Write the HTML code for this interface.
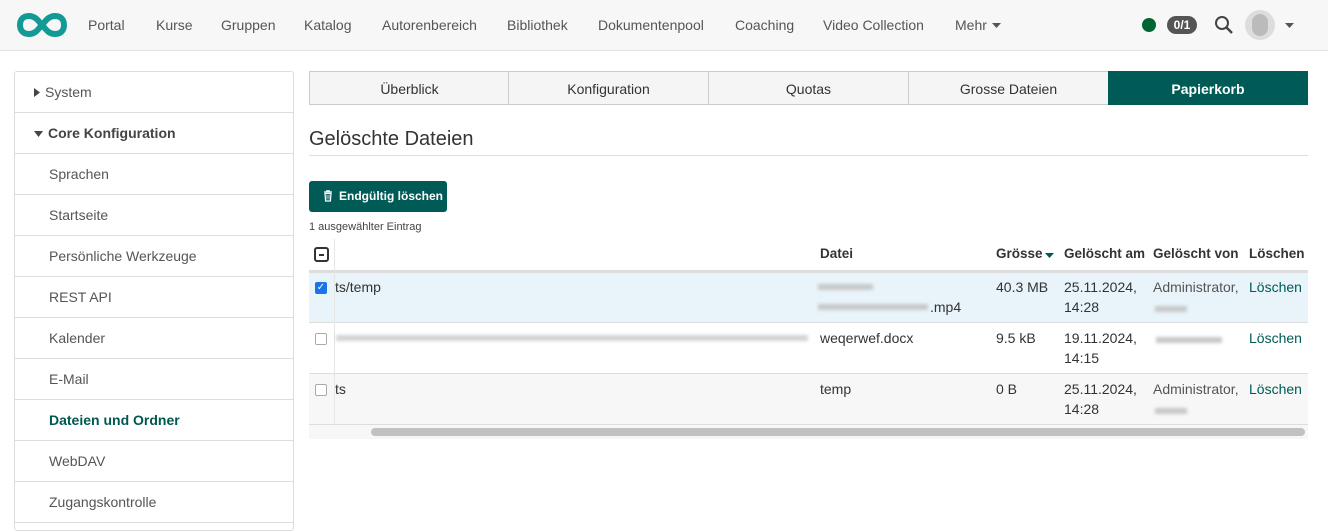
<!DOCTYPE html>
<html><head><meta charset="utf-8"><style>
*{box-sizing:border-box;margin:0;padding:0}
body{width:1328px;height:508px;overflow:hidden;background:#fff;font-family:"Liberation Sans",Arial,sans-serif;color:#333;position:relative;font-size:14px}
.a{position:absolute;white-space:nowrap}
.nav{left:0;top:0;width:1328px;height:51px;background:#f7f7f7;border-bottom:1px solid #e2e2e2}
.side{left:14px;top:71px;width:280px;height:460px;border:1px solid #ddd;border-radius:3px}
.si{position:absolute;left:0;width:278px;height:41px;border-bottom:1px solid #ddd;font-size:14px;color:#555;padding:12px 0 0 34px}
.tab{top:71px;height:34px;border:1px solid #ccc;background:#f5f5f5;font-size:14px;text-align:center;padding-top:9px;color:#333;width:201px}
.td{font-size:14px;color:#333}
.blur{background:#c8c8c8;filter:blur(1.5px);height:6px;position:absolute}
.cb{width:12px;height:12px;border:1px solid #aaa;border-radius:2px;background:#fff}
</style></head><body>
<div class="a nav"></div>
<svg class="a" style="left:16px;top:12px" width="52" height="26" viewBox="0 0 52 26"><path d="M13 4C6 4 4 9 4 13s2 9 9 9c7 0 10-6 13-9s6-9 13-9c7 0 9 5 9 9s-2 9-9 9c-7 0-10-6-13-9S20 4 13 4z" fill="none" stroke="#139a94" stroke-width="6"/></svg>
<span class="a" style="left:88px;top:17px;color:#555">Portal</span>
<span class="a" style="left:156px;top:17px;color:#555">Kurse</span>
<span class="a" style="left:221px;top:17px;color:#555">Gruppen</span>
<span class="a" style="left:304px;top:17px;color:#555">Katalog</span>
<span class="a" style="left:382px;top:17px;color:#555">Autorenbereich</span>
<span class="a" style="left:507px;top:17px;color:#555">Bibliothek</span>
<span class="a" style="left:598px;top:17px;color:#555">Dokumentenpool</span>
<span class="a" style="left:735px;top:17px;color:#555">Coaching</span>
<span class="a" style="left:823px;top:17px;color:#555">Video Collection</span>
<span class="a" style="left:955px;top:17px;color:#555">Mehr</span>
<svg class="a" style="left:992px;top:23px" width="9" height="5"><path d="M0 0h9L4.5 5z" fill="#555"/></svg>
<div class="a" style="left:1142px;top:18px;width:14px;height:14px;border-radius:50%;background:#006633"></div>
<div class="a" style="left:1167px;top:16px;width:30px;height:18px;border-radius:9px;background:#555;color:#fff;font-size:12px;font-weight:bold;text-align:center;padding-top:2px">0/1</div>
<svg class="a" style="left:1214px;top:15px" width="20" height="20"><circle cx="8" cy="8" r="6" fill="none" stroke="#444" stroke-width="2"/><path d="M12.5 12.5L18 18" stroke="#444" stroke-width="2.4"/></svg>
<div class="a" style="left:1245px;top:10px;width:30px;height:30px;border-radius:50%;background:#ddd"><div style="margin:4px 7px;width:16px;height:22px;border-radius:8px;background:#bbb"></div></div>
<svg class="a" style="left:1285px;top:23px" width="9" height="5"><path d="M0 0h9L4.5 5z" fill="#555"/></svg>

<div class="a side">
<div class="si" style="top:0;padding-left:19px"><svg width="6" height="9" style="margin-right:5px"><path d="M0 0l6 4.5L0 9z" fill="#444"/></svg>System</div>
<div class="si" style="top:41px;padding-left:19px;font-weight:bold;color:#444"><svg width="9" height="6" style="margin-right:5px;vertical-align:1px"><path d="M0 0h9L4.5 6z" fill="#444"/></svg>Core Konfiguration</div>
<div class="si" style="top:82px">Sprachen</div>
<div class="si" style="top:123px">Startseite</div>
<div class="si" style="top:164px">Persönliche Werkzeuge</div>
<div class="si" style="top:205px">REST API</div>
<div class="si" style="top:246px">Kalender</div>
<div class="si" style="top:287px">E-Mail</div>
<div class="si" style="top:328px;font-weight:bold;color:#00574f">Dateien und Ordner</div>
<div class="si" style="top:369px">WebDAV</div>
<div class="si" style="top:410px">Zugangskontrolle</div>
</div>

<div class="a tab" style="left:309px">Überblick</div>
<div class="a tab" style="left:508px">Konfiguration</div>
<div class="a tab" style="left:708px">Quotas</div>
<div class="a tab" style="left:908px">Grosse Dateien</div>
<div class="a tab" style="left:1108px;width:200px;background:#005a55;border-color:#005a55;color:#fff;font-weight:bold">Papierkorb</div>

<div class="a" style="left:309px;top:128px;font-size:20px;color:#333">Gelöschte Dateien</div>
<div class="a" style="left:309px;top:155px;width:999px;height:1px;background:#ddd"></div>

<div class="a" style="left:309px;top:181px;width:138px;height:31px;background:#005a55;border-radius:3px;color:#fff;font-size:12px;font-weight:bold;padding:8px 0 0 30px">Endgültig löschen</div>
<svg class="a" style="left:323px;top:190px" width="10" height="12"><path d="M1 2h8M3.5 2V0.8h3V2M2 3.5l.6 7.5h4.8L8 3.5z" fill="none" stroke="#fff" stroke-width="1.2"/><path d="M4 5v4.5M6 5v4.5" stroke="#fff" stroke-width=".8"/></svg>
<div class="a" style="left:309px;top:221px;font-size:11px;color:#444">1 ausgewählter Eintrag</div>

<div class="a" style="left:309px;top:270px;width:999px;height:3px;background:#ddd"></div>
<div class="a" style="left:309px;top:273px;width:999px;height:49px;background:#e8f4fa"></div>
<div class="a" style="left:309px;top:322px;width:999px;height:1px;background:#ddd"></div>
<div class="a" style="left:309px;top:373px;width:999px;height:1px;background:#ddd"></div>
<div class="a" style="left:309px;top:374px;width:999px;height:50px;background:#f7f7f7"></div>
<div class="a" style="left:309px;top:424px;width:999px;height:1px;background:#ddd"></div>
<div class="a" style="left:309px;top:425px;width:999px;height:14px;background:#f7f7f7"></div>
<div class="a" style="left:371px;top:428px;width:934px;height:8px;border-radius:4px;background:#c1c1c1"></div>
<div class="a" style="left:309px;top:239px;width:26px;height:186px;border-right:1px solid #e6e6e6"></div>

<div class="a" style="left:314px;top:247px;width:15px;height:15px;border:2px solid #333;border-radius:3px"><div style="margin:4.5px 3px;height:2px;background:#333"></div></div>
<div class="a" style="left:315px;top:282px;width:12px;height:12px;background:#1a73e8;border-radius:2px;color:#fff;font-size:10px;line-height:12px;text-align:center">✓</div>
<div class="a cb" style="left:315px;top:333px"></div>
<div class="a cb" style="left:315px;top:384px"></div>

<span class="a td" style="left:335px;top:279px">ts/temp</span>
<div class="blur" style="left:336px;top:335px;width:472px;opacity:.8"></div>
<span class="a td" style="left:335px;top:381px">ts</span>

<b class="a td" style="left:820px;top:246px;font-size:13.5px">Datei</b>
<b class="a td" style="left:996px;top:246px;font-size:13.5px">Grösse</b>
<svg class="a" style="left:1045px;top:253px" width="9" height="5"><path d="M0 0h9L4.5 5z" fill="#005a55"/></svg>
<b class="a td" style="left:1064px;top:246px;font-size:13.5px">Gelöscht am</b>
<b class="a td" style="left:1153px;top:246px;font-size:13.5px">Gelöscht von</b>
<b class="a td" style="left:1249px;top:246px;font-size:13.5px">Löschen</b>

<div class="blur" style="left:818px;top:284px;width:55px"></div>
<div class="blur" style="left:818px;top:304px;width:110px"></div>
<span class="a td" style="left:930px;top:299px">.mp4</span>
<span class="a td" style="left:820px;top:330px">weqerwef.docx</span>
<span class="a td" style="left:820px;top:381px">temp</span>

<span class="a td" style="left:996px;top:279px">40.3 MB</span>
<span class="a td" style="left:996px;top:330px">9.5 kB</span>
<span class="a td" style="left:996px;top:381px">0 B</span>

<div class="a td" style="left:1064px;top:277px;line-height:20px">25.11.2024,<br>14:28</div>
<div class="a td" style="left:1064px;top:328px;line-height:20px">19.11.2024,<br>14:15</div>
<div class="a td" style="left:1064px;top:379px;line-height:20px">25.11.2024,<br>14:28</div>

<span class="a td" style="left:1153px;top:279px;color:#555">Administrator,</span>
<div class="blur" style="left:1155px;top:306px;width:32px"></div>
<div class="blur" style="left:1156px;top:337px;width:66px"></div>
<span class="a td" style="left:1153px;top:381px;color:#555">Administrator,</span>
<div class="blur" style="left:1155px;top:408px;width:32px"></div>

<span class="a td" style="left:1249px;top:279px;color:#005a55">Löschen</span>
<span class="a td" style="left:1249px;top:330px;color:#005a55">Löschen</span>
<span class="a td" style="left:1249px;top:381px;color:#005a55">Löschen</span>
</body></html>
